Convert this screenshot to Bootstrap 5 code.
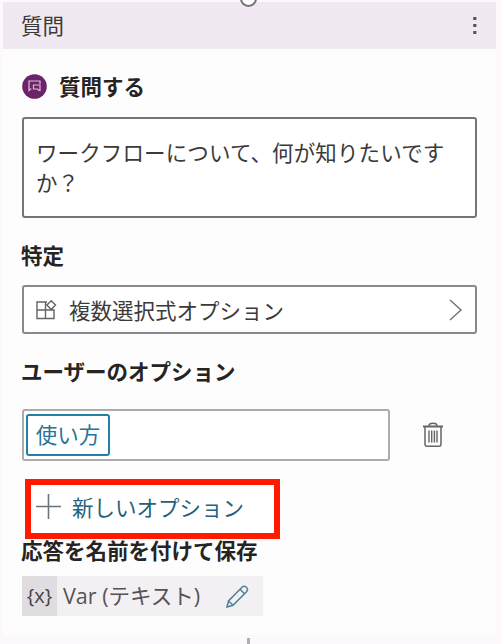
<!DOCTYPE html>
<html lang="ja">
<head>
<meta charset="utf-8">
<meta name="viewport" content="width=device-width, initial-scale=1">
<title>質問</title>
<link href="https://cdn.jsdelivr.net/npm/bootstrap@5.3.0/dist/css/bootstrap.min.css" rel="stylesheet">
<style>
body{background:#fcf8fb;color:#3b3a39;font-family:"Noto Sans CJK JP",sans-serif;font-size:21.5px;line-height:30px;height:644px;overflow:hidden}
.node{margin:2px 6px 0 3px;height:633px;background:#fefdfe}
.node-head{height:47px;background:#f1e9f2;padding:0 18px 2px 18px}
.node-body{padding:22px 19px 0}
.heading{color:#252423;font-weight:700;height:30px;white-space:nowrap}
.heading span{position:static}
.node-icon{margin-right:12px}
.field{border:2px solid #8a888a;border-radius:3px;background:#fff}
.message{height:101px;margin-top:16px;padding:18px 12px;border-color:#777577;letter-spacing:.12px}
.identify{margin-top:22px;margin-left:-1px}
.picker{height:49px;margin-top:15px;padding:0 12px}
.picker-name{margin-left:12px}
.options-title{margin-top:22px;margin-left:-1px}
.choices{width:368px;height:52px;padding:3px 2px;border-color:#adabad}
.choice{border:2px solid #2380a5;border-radius:3px;color:#2a7398;height:42px;width:84px;padding-bottom:2px}
.trash{margin-left:32px;color:#656365}
.add{width:255px;height:60px;border:6px solid #ff1a00;margin:18px 0 0 3px;color:#23627d;background:#fff;padding:0 0 5px 5px}
.add-name{margin-left:11px}
.save-title{margin-top:-4px;margin-left:-1px}
.variable{width:241px;height:40px;background:#f3f0f3;margin-top:11px;color:#555355}
.sign{width:35px;height:40px;background:#dfdde0;color:#454345;font-family:"Open Sans",sans-serif;font-size:20px}
.var-name{font-family:"Open Sans","Noto Sans CJK JP",sans-serif;margin-left:6px;white-space:pre}
.pencil{color:#4d8199;margin-right:14px}
.port{left:240px;top:-10px;width:17px;height:17px;border:2px solid #747174;background:#fff}
.wire{left:247px;top:638px;width:3px;height:6px;background:#b2adb2}
svg{flex:none;display:block;fill:none;stroke:currentColor}
</style>
<script src="https://cdn.jsdelivr.net/npm/bootstrap@5.3.0/dist/js/bootstrap.bundle.min.js"></script>
</head>
<body class="position-relative">
<main class="node">
  <header class="node-head d-flex align-items-center justify-content-between">
    <span>質問</span>
    <svg width="6" height="20" style="color:#555"><g fill="currentColor" stroke="none"><rect x="1.2" y="2" width="3.2" height="3"/><rect x="1.2" y="9" width="3.2" height="3"/><rect x="1.2" y="16" width="3.2" height="3"/></g></svg>
  </header>
  <div class="node-body">
    <div class="heading d-flex align-items-center">
      <svg class="node-icon" width="25" height="25" viewBox="0 0 25 25"><circle cx="12.500" cy="12.500" r="12.300" fill="#6b2467" stroke="none"/><g stroke="#d9bfd8" stroke-width="1.200"><path d="M9.500 15H8.500L7 16.500V7h11v3M11.500 15.500v-4.500h6.500v5.500h-1l-1.500-1.500h-4"/></g></svg>
      <span>質問する</span>
    </div>
    <div class="field message">ワークフローについて、何が知りたいですか？</div>
    <div class="heading identify">特定</div>
    <div class="field picker d-flex align-items-center">
      <svg width="21" height="20" viewBox="0 0 21 20" stroke-width="1.400" style="color:#656365"><path d="M11 2H1v16.500h17V10H1M9.500 2v16.500M15.200 .8l4.300 4.300-4.300 4.300-4.300-4.300z"/></svg>
      <span class="picker-name">複数選択式オプション</span>
      <svg class="ms-auto" width="14" height="22" viewBox="0 0 14 22" stroke-width="1.500" style="color:#777"><path d="M1 1l11 10L1 21"/></svg>
    </div>
    <div class="heading options-title">ユーザーのオプション</div>
    <div class="d-flex align-items-center" style="margin-top:23px">
      <div class="field choices"><div class="choice d-flex align-items-center justify-content-center">使い方</div></div>
      <svg class="trash" width="22" height="26" viewBox="0 0 22 26" stroke-width="1.500"><path d="M1 4.500h20" stroke-width="2"/><path d="M7 4c0-3.600 8-3.600 8 0M3 5v17q0 2.300 2 2.300h12q2 0 2-2.300V5"/><path d="M7 8.500v12M9.700 8.500v12M12.400 8.500v12M15 8.500v12" stroke-width="1.400"/></svg>
    </div>
    <div class="add d-flex align-items-center">
      <svg width="25" height="25" viewBox="0 0 25 25" stroke-width="1.600" style="color:#68757d"><path d="M12.500 0v25M0 12.500h25"/></svg>
      <span class="add-name">新しいオプション</span>
    </div>
    <div class="heading save-title">応答を名前を付けて保存</div>
    <div class="variable d-flex align-items-center">
      <div class="sign d-flex align-items-center justify-content-center">{x}</div>
      <span class="var-name">Var (テキスト)</span>
      <svg class="ms-auto pencil" width="23" height="23" viewBox="0 0 23 23" stroke-width="1.500"><path d="M1 22l1.500-6L16 2.200q2.200-2 4.400 0 2.200 2.200.1 4.500L7 20.300zM2.500 16L7 20.300M14 4.300l4.500 4.500"/></svg>
    </div>
  </div>
</main>
<div class="port position-absolute rounded-circle"></div>
<div class="wire position-absolute"></div>
</body>
</html>
